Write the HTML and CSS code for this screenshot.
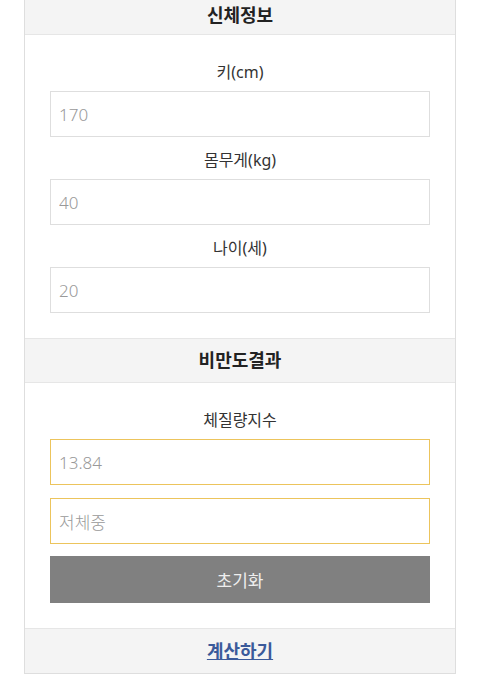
FILE: index.html
```html
<!DOCTYPE html>
<html lang="ko">
<head>
    <meta charset="UTF-8">
    <meta name="viewport" content="width=device-width, initial-scale=1.0">
    <title>비만도 계산기</title>
    <link rel="stylesheet" href="styles.css">
</head>
<body>
    <div class="calc">
        <div class="section-head first">신체정보</div>
        <div class="section-body">
            <label class="field-label" for="height">키(cm)</label>
            <input class="field" id="height" type="text" value="170">
            <label class="field-label" for="weight">몸무게(kg)</label>
            <input class="field" id="weight" type="text" value="40">
            <label class="field-label" for="age">나이(세)</label>
            <input class="field" id="age" type="text" value="20">
        </div>

        <div class="section-head">비만도결과</div>
        <div class="section-body">
            <label class="field-label" for="bmi">체질량지수</label>
            <input class="field result" id="bmi" type="text" value="13.84" readonly>
            <input class="field result second" id="grade" type="text" value="저체중" readonly>
            <button class="btn-reset" type="button">초기화</button>
        </div>

        <div class="section-foot">
            <a href="#" class="calc-link">계산하기</a>
        </div>
    </div>
</body>
</html>
```

FILE: styles.css
```css
/* 비만도 계산기 */
:root {
    --border: #dedede;
    --head-bg: #f4f4f4;
    --text: #333333;
    --value: #999999;
    --result: #ecc45c;
    --link: #3b5a9a;
}

* {
    margin: 0;
    padding: 0;
    box-sizing: border-box;
}

body {
    font-family: 'Noto Sans', 'Noto Sans CJK KR', sans-serif;
    background-color: #ffffff;
    color: var(--text);
}

.calc {
    width: 432px;
    margin: 0 auto;
    border-left: 1px solid var(--border);
    border-right: 1px solid var(--border);
    border-bottom: 1px solid var(--border);
}

.section-head {
    height: 45px;
    line-height: 43px;
    text-align: center;
    font-size: 18px;
    font-weight: bold;
    color: #222;
    background-color: var(--head-bg);
    border-top: 1px solid #e6e6e6;
    border-bottom: 1px solid #e6e6e6;
}

.section-head.first {
    height: 35px;
    line-height: 30px;
    border-top: none;
}

.section-body {
    display: flex;
    flex-direction: column;
    padding: 14px 25px 25px;
}

.field-label {
    display: block;
    text-align: center;
    font-size: 16px;
    line-height: 24px;
    margin: 11px 0 7px;
}

.field {
    width: 100%;
    height: 46px;
    padding: 0 8px;
    border: 1px solid var(--border);
    font-family: inherit;
    font-size: 17px;
    font-weight: 300;
    color: var(--value);
    background-color: #fff;
    outline: none;
}

.field.result {
    border-color: var(--result);
}

.field.second {
    margin-top: 13px;
}

.btn-reset {
    margin-top: 12px;
    height: 47px;
    border: none;
    background-color: #808080;
    color: #eeeeee;
    font-family: inherit;
    font-size: 17px;
}

.section-foot {
    height: 45px;
    line-height: 45px;
    text-align: center;
    background-color: var(--head-bg);
    border-top: 1px solid #e6e6e6;
}

.calc-link {
    color: var(--link);
    font-size: 18px;
    font-weight: bold;
}
```
